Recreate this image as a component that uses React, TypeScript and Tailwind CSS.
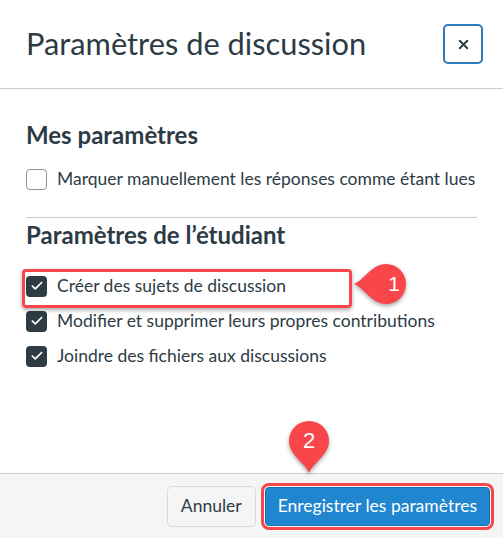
import { X, Check } from 'lucide-react';

const font = { fontFamily: 'Lato, "Noto Sans", sans-serif' };

function Checkbox({ checked }: { checked: boolean }) {
  return checked ? (
    <span className="flex h-[21px] w-[21px] shrink-0 items-center justify-center rounded-[4px] bg-[#2d3b45]">
      <Check className="h-[14px] w-[14px] text-white" strokeWidth={3} />
    </span>
  ) : (
    <span className="h-[21px] w-[21px] shrink-0 rounded-[4px] border border-[#8b969e] bg-white" />
  );
}

function Row({ label, checked }: { label: string; checked: boolean }) {
  return (
    <div className="flex h-[22px] items-center gap-[10px]">
      <Checkbox checked={checked} />
      <span className="whitespace-nowrap text-[17.5px] leading-none text-[#2d3b45]">{label}</span>
    </div>
  );
}

// red teardrop marker, tip direction given by rotation
function Pin({ rotate }: { rotate: number }) {
  return (
    <svg width="64" height="64" viewBox="0 0 64 64" className="drop-shadow-[0_2px_2px_rgba(0,0,0,0.35)]">
      <g transform={`rotate(${rotate} 32 32)`}>
        <path d="M32 60 C28 50 12 42 12 28 A20 20 0 1 1 52 28 C52 42 36 50 32 60 Z" fill="#f9464a" />
      </g>
    </svg>
  );
}

export default function App() {
  return (
    <div className="relative h-[538px] w-[503px] overflow-hidden bg-white text-[#2d3b45]" style={font}>
      <div className="flex h-[89px] items-center justify-between border-b border-[#c7cdd1] pl-[26px] pr-[20px]">
        <h1 className="text-[30.8px] font-normal leading-none">Paramètres de discussion</h1>
        <button className="flex h-[40px] w-[40px] items-center justify-center rounded-[5px] border-2 border-[#2b7abc] bg-white">
          <X className="h-[15px] w-[15px] text-[#2d3b45]" strokeWidth={3.2} />
        </button>
      </div>

      <div className="flex h-[384px] flex-col px-[26px]">
        <h2 className="mt-[34px] text-[24px] font-bold leading-none">Mes paramètres</h2>
        <div className="mt-[21px]">
          <Row label="Marquer manuellement les réponses comme étant lues" checked={false} />
        </div>
        <div className="mt-[27px] border-t border-[#c7cdd1]" />
        <h2 className="mt-[5px] text-[24px] font-bold leading-none">Paramètres de l’étudiant</h2>
        <div className="mt-[28px] flex flex-col gap-[13px]">
          <Row label="Créer des sujets de discussion" checked />
          <Row label="Modifier et supprimer leurs propres contributions" checked />
          <Row label="Joindre des fichiers aux discussions" checked />
        </div>
      </div>

      <div className="flex h-[65px] items-center justify-end gap-[9px] border-t border-[#c7cdd1] bg-[#f5f5f5] pr-[13px]">
        <button className="h-[41px] rounded-[5px] border border-[#d7dbde] bg-[#f5f5f5] px-[13px] text-[17.5px] text-[#2d3b45]">
          Annuler
        </button>
        <button className="h-[39px] rounded-[4px] border border-[#1a6fad] bg-[#2086cf] px-[12px] text-[17.5px] text-white outline outline-[3px] outline-offset-[1px] outline-[#f9464a]">
          Enregistrer les paramètres
        </button>
      </div>

      {/* annotation overlays */}
      <div className="absolute left-[22px] top-[269px] h-[39px] w-[330px] rounded-[4px] border-[3px] border-[#f9464a] shadow-[0_2px_4px_rgba(0,0,0,0.35)]" />
      <div className="absolute left-[350px] top-[252px]">
        <div className="relative">
          <Pin rotate={90} />
          <span className="absolute inset-0 flex items-center justify-center pl-[24px] text-[21px] text-white" style={{ fontFamily: '"Liberation Sans", Arial, sans-serif' }}>1</span>
        </div>
      </div>
      <div className="absolute left-[277px] top-[413px]">
        <div className="relative">
          <Pin rotate={0} />
          <span className="absolute inset-0 flex items-center justify-center pb-[10px] text-[22px] text-white" style={{ fontFamily: '"Liberation Sans", Arial, sans-serif' }}>2</span>
        </div>
      </div>
    </div>
  );
}
